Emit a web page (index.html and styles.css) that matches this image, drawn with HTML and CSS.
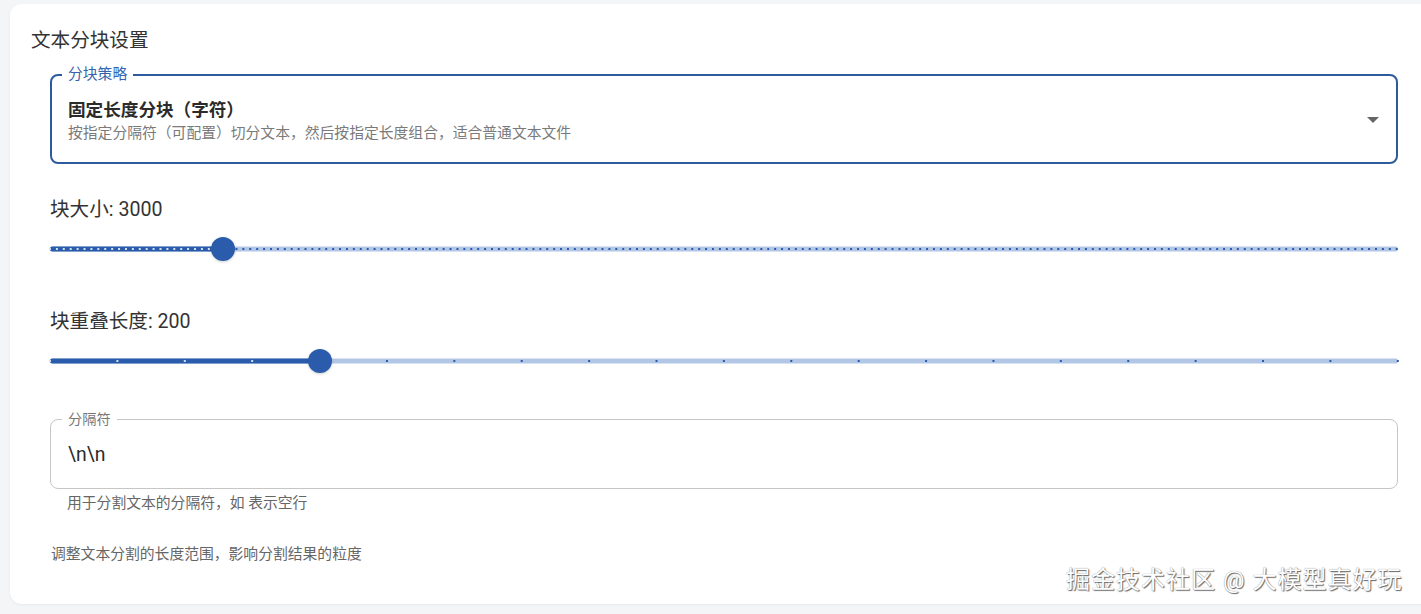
FILE: index.html
```html
<!DOCTYPE html>
<html lang="zh-CN">
<head>
<meta charset="utf-8">
<title>文本分块设置</title>
<link rel="stylesheet" href="styles.css">
</head>
<body>
<div class="page">
  <section class="card">
    <h2 class="card-title">文本分块设置</h2>
    <div class="card-body">
      <div class="outlined select focused">
        <span class="floating-label">分块策略</span>
        <div class="select-value">
          <div class="option-title">固定长度分块（字符）</div>
          <div class="option-desc">按指定分隔符（可配置）切分文本，然后按指定长度组合，适合普通文本文件</div>
        </div>
        <span class="caret"></span>
      </div>

      <div class="slider-label">块大小: 3000</div>
      <div class="slider" style="--pct: 12.8205%; --steps: 195;">
        <div class="rail"></div>
        <div class="ticks rail-ticks"></div>
        <div class="track"></div>
        <div class="ticks track-ticks"></div>
        <div class="thumb"></div>
      </div>

      <div class="slider-label second">块重叠长度: 200</div>
      <div class="slider" style="--pct: 20%; --steps: 20;">
        <div class="rail"></div>
        <div class="ticks rail-ticks"></div>
        <div class="track"></div>
        <div class="ticks track-ticks"></div>
        <div class="thumb"></div>
      </div>

      <div class="outlined textfield">
        <span class="floating-label muted">分隔符</span>
        <div class="field-value">\n\n</div>
      </div>
      <div class="helper">用于分割文本的分隔符，如 表示空行</div>

      <p class="note">调整文本分割的长度范围，影响分割结果的粒度</p>
    </div>
  </section>
  <div class="watermark">掘金技术社区 @ 大模型真好玩</div>
</div>
</body>
</html>
```

FILE: styles.css
```css
html, body {
  margin: 0;
  padding: 0;
  background: #f4f5f6;
  overflow: hidden;
  font-family: Roboto, "Noto Sans CJK SC", "Noto Sans", sans-serif;
  color: #333;
}

.page {
  position: relative;
  width: 1421px;
  height: 614px;
  padding: 4px 0 0 10px;
  box-sizing: border-box;
}

.card {
  background: #fff;
  border-radius: 12px;
  margin-right: -14px;
  height: 600px;
  box-sizing: border-box;
  padding-top: 23px;
  box-shadow: 0 1px 3px rgba(0, 0, 0, 0.05);
}

.card-title {
  margin: 0 0 19px 21px;
  font-size: 19.6px;
  line-height: 28px;
  font-weight: 400;
  color: #333;
}

.card-body {
  padding: 0 37px 0 40px;
  display: flex;
  flex-direction: column;
}

/* outlined inputs */
.outlined {
  position: relative;
  border: 1px solid #c6c6c6;
  border-radius: 8px;
  box-sizing: border-box;
}

.outlined.focused {
  border: 2px solid #2d5b9e;
}

.floating-label {
  position: absolute;
  top: -12px;
  left: 10px;
  padding: 0 6px;
  background: #fff;
  font-size: 14.8px;
  line-height: 20px;
  color: #3563ae;
}

.floating-label.muted {
  top: -11px;
  left: 11px;
  font-size: 14.2px;
  color: #777;
}

.select {
  height: 90px;
  display: flex;
  align-items: center;
  padding: 3px 17px 0 16px;
}

.select-value {
  flex: 1;
  display: flex;
  flex-direction: column;
}

.option-title {
  font-size: 17.6px;
  line-height: 24px;
  font-weight: 700;
  color: #2b2b2b;
}

.option-desc {
  font-size: 14.8px;
  line-height: 22px;
  color: #7a7a7a;
}

.caret {
  width: 0;
  height: 0;
  border-left: 6px solid transparent;
  border-right: 6px solid transparent;
  border-top: 6px solid #666;
  margin-top: -1px;
}

/* sliders */
.slider-label {
  margin-top: 32px;
  font-size: 19.6px;
  line-height: 28px;
  color: #333;
}

.slider-label.second {
  margin-top: 47px;
}

.slider {
  position: relative;
  height: 24px;
  margin-top: 13px;
}

.rail,
.track,
.ticks {
  position: absolute;
  top: 50%;
  height: 5px;
  transform: translateY(-50%);
}

.rail {
  left: 0;
  right: 0;
  background: #b2c6e5;
  border-radius: 2px;
}

.track {
  left: 0;
  width: var(--pct);
  background: #2b5cab;
  border-radius: 3px;
}

.ticks {
  left: -1px;
  right: -1px;
  height: 2px;
  background-repeat: repeat-x;
  background-position: 0 0;
  background-size: calc((100% - 2px) / var(--steps)) 2px;
}

.rail-ticks {
  background-image: linear-gradient(to right, #2b5cab 0 2px, transparent 2px);
}

.track-ticks {
  background-image: linear-gradient(to right, rgba(255, 255, 255, 0.8) 0 2px, transparent 2px);
  clip-path: inset(0 calc(100% - var(--pct)) 0 0);
}

.thumb {
  position: absolute;
  top: 50%;
  left: var(--pct);
  width: 24px;
  height: 24px;
  border-radius: 50%;
  background: #2b5cab;
  transform: translate(-50%, -50%);
  box-shadow: 0 1px 3px rgba(0, 0, 0, 0.18);
}

/* text field */
.textfield {
  margin-top: 46px;
  height: 70px;
  padding: 22px 16px 0 17px;
}

.field-value {
  font-size: 19.4px;
  line-height: 26px;
  color: #2b2b2b;
}

.helper {
  margin-top: 4px;
  padding-left: 17px;
  font-size: 14.8px;
  line-height: 20px;
  color: #666;
}

.note {
  margin: 31px 0 0 1px;
  font-size: 14.8px;
  line-height: 20px;
  color: #666;
}

/* site watermark over the card corner */
.watermark {
  position: absolute;
  left: 1066px;
  top: 565px;
  font-size: 24px;
  line-height: 30px;
  letter-spacing: 1px;
  color: #fff;
  white-space: nowrap;
  text-shadow: 1px 1px 1px #666, 0 0 1px #777;
}
```
